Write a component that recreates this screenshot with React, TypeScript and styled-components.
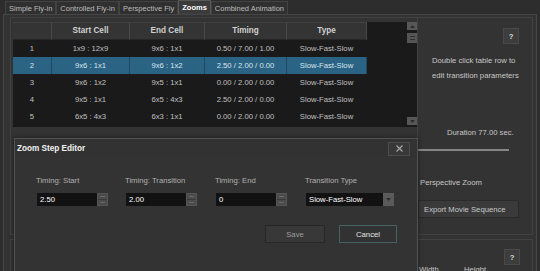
import React from "react";
import styled, { createGlobalStyle } from "styled-components";

const Global = createGlobalStyle`
  html, body { margin: 0; padding: 0; background: #2d2d2d; }
  body {
    font-family: "Liberation Sans", Arial, sans-serif;
    font-size: 7.7px;
    color: #c8c8c8;
  }
  * { box-sizing: border-box; }
`;

const Window = styled.div`
  position: relative;
  width: 540px;
  height: 271px;
  overflow: hidden;
  background: #2d2d2d;
  display: flex;
  flex-direction: column;
`;

const TabBar = styled.div`
  display: flex;
  align-items: flex-end;
  height: 22px;
  padding-left: 5px;
`;

const Tab = styled.div<{ $active?: boolean }>`
  height: ${(p) => (p.$active ? 14 : 13)}px;
  padding: 0 3px;
  border: 1px solid ${(p) => (p.$active ? "#585858" : "#424242")};
  border-bottom: none;
  background: ${(p) => (p.$active ? "#3b3b3b" : "#303030")};
  color: ${(p) => (p.$active ? "#ffffff" : "#bdbdbd")};
  font-weight: ${(p) => (p.$active ? 700 : 400)};
  font-size: 7.5px;
  display: flex;
  align-items: center;
  white-space: nowrap;
`;

const TabPanel = styled.div`
  flex: 1;
  margin: 0 3px;
  border: 1px solid #464646;
  background: #333333;
  padding: 2px 3px 0 6px;
  display: flex;
  flex-direction: column;
  gap: 4px;
`;

const TopRow = styled.div`
  display: flex;
  height: 218px;
`;

const BottomRow = styled.div`
  display: flex;
  flex: 1;
`;

const LeftGroup = styled.div`
  width: 407px;
  border: 1px solid #414141;
  border-right: none;
  padding: 4px 0 0 2px;
`;

const RightGroup = styled.div`
  flex: 1;
  border: 1px solid #414141;
  display: flex;
  flex-direction: column;
`;

const TableFrame = styled.div`
  display: flex;
  width: 404px;
  height: 105px;
  background: #1a1a1a;
`;

const Grid = styled.div`
  width: 393px;
  display: flex;
  flex-direction: column;
`;

const HeaderRow = styled.div`
  display: flex;
  height: 18px;
`;

const HeaderCell = styled.div<{ $w: number }>`
  width: ${(p) => p.$w}px;
  background: #343434;
  border-right: 1px solid #484848;
  border-bottom: 1px solid #262626;
  box-shadow: inset 0 1px 0 #404040;
  display: flex;
  align-items: center;
  justify-content: center;
  font-weight: 700;
  font-size: 8.2px;
  color: #d0d0d0;
`;

const Row = styled.div`
  display: flex;
  height: 17px;
`;

const Cell = styled.div<{ $w: number; $selected?: boolean }>`
  width: ${(p) => p.$w}px;
  background: ${(p) => (p.$selected ? "#2a6383" : "transparent")};
  border-right: 1px solid ${(p) => (p.$selected ? "#1e4a62" : "transparent")};
  color: ${(p) => (p.$selected ? "#d8e6ee" : "#c0c0c0")};
  display: flex;
  align-items: center;
  justify-content: center;
  white-space: nowrap;
`;

const ScrollBar = styled.div`
  width: 10px;
  margin-left: 1px;
  display: flex;
  flex-direction: column;
  padding-bottom: 2px;
`;

const ScrollBtn = styled.div`
  height: 8px;
  background: #575757;
  display: flex;
  align-items: center;
  justify-content: center;
`;

const ScrollThumb = styled.div`
  height: 10px;
  margin-top: 3px;
  background: #555555;
  display: flex;
  flex-direction: column;
  align-items: center;
  justify-content: center;
  gap: 2px;
`;

const GripLine = styled.div`
  width: 5px;
  height: 1px;
  background: #2f2f2f;
`;

const Spacer = styled.div`
  flex: 1;
`;

const HelpButton = styled.div<{ $mt: number; $mr: number }>`
  width: 16px;
  height: 16px;
  margin-top: ${(p) => p.$mt}px;
  margin-right: ${(p) => p.$mr}px;
  align-self: flex-end;
  background: #3d3d3d;
  border: 1px solid #4a4a4a;
  color: #dcdcdc;
  font-weight: 700;
  display: flex;
  align-items: center;
  justify-content: center;
`;

const Hint = styled.div`
  margin-top: 9px;
  padding-left: 14px;
  line-height: 15px;
  color: #c8c8c8;
`;

const Duration = styled.div`
  margin-top: 45px;
  padding-left: 29px;
  line-height: 10px;
  color: #c8c8c8;
`;

const ProgressLine = styled.div`
  margin-top: 11px;
  width: 91px;
  height: 2px;
  background: #858585;
`;

const CheckLabel = styled.div`
  margin-top: 27px;
  padding-left: 2px;
  line-height: 10px;
  color: #c8c8c8;
`;

const ExportButton = styled.div`
  margin-top: 12px;
  width: 101px;
  height: 18px;
  background: #3a3a3a;
  border: 1px solid #2a2a2a;
  padding-left: 5px;
  display: flex;
  align-items: center;
  color: #c8c8c8;
  white-space: nowrap;
`;

const LeftBottomGroup = styled.div`
  width: 407px;
  border: 1px solid #414141;
  border-right: none;
  border-bottom: none;
`;

const RightBottomGroup = styled.div`
  flex: 1;
  border: 1px solid #414141;
  border-bottom: none;
  display: flex;
  align-items: flex-start;
  padding: 0 12px 0 2px;
`;

const SizeLabel = styled.div<{ $w: number }>`
  width: ${(p) => p.$w}px;
  margin-top: 25px;
  line-height: 10px;
  color: #c8c8c8;
`;

const BottomHelp = styled.div`
  margin-left: auto;
  margin-top: 9px;
  width: 16px;
  height: 16px;
  background: #3d3d3d;
  border: 1px solid #4a4a4a;
  color: #dcdcdc;
  font-weight: 700;
  display: flex;
  align-items: center;
  justify-content: center;
`;

/* dialog overlay */
const Dialog = styled.div`
  position: absolute;
  left: 14px;
  top: 138px;
  width: 404px;
  height: 140px;
  background: #333333;
  border: 1px solid #525252;
  box-shadow: 0 0 4px rgba(0, 0, 0, 0.5);
  display: flex;
  flex-direction: column;
`;

const TitleBar = styled.div`
  height: 19px;
  display: flex;
  align-items: center;
  padding: 0 7px 0 2px;
  background: #323232;
  font-weight: 700;
  font-size: 8.2px;
  color: #f2f2f2;
`;

const CloseButton = styled.div`
  margin-left: auto;
  width: 22px;
  height: 14px;
  background: #383838;
  border: 1px solid #4c4c4c;
  display: flex;
  align-items: center;
  justify-content: center;
`;

const DialogBody = styled.div`
  padding: 18px 20px 0 21px;
  display: flex;
  flex-direction: column;
`;

const FieldRow = styled.div`
  display: flex;
`;

const Field = styled.div<{ $w?: number }>`
  width: ${(p) => (p.$w ? `${p.$w}px` : "auto")};
  display: flex;
  flex-direction: column;
`;

const FieldLabel = styled.div`
  line-height: 10px;
  color: #b0b0b0;
  white-space: nowrap;
`;

const InputRow = styled.div`
  margin-top: 7px;
  margin-left: 1px;
  display: flex;
  height: 13px;
`;

const Input = styled.div<{ $w: number }>`
  width: ${(p) => p.$w}px;
  background: #121212;
  color: #ffffff;
  padding-left: 3px;
  line-height: 13px;
  white-space: nowrap;
`;

const Spinner = styled.div`
  width: 11px;
  display: flex;
  flex-direction: column;
  background: #4b4b4b;
  border: 1px solid #555555;
`;

const SpinHalf = styled.div`
  flex: 1;
  display: flex;
  align-items: center;
  justify-content: center;
  & + & {
    border-top: 1px solid #3a3a3a;
  }
`;

const SpinMark = styled.div`
  width: 5px;
  height: 1px;
  background: #6a6a6a;
`;

const DropButton = styled.div`
  width: 11px;
  background: #5a5a5a;
  display: flex;
  align-items: center;
  justify-content: center;
`;

const ButtonRow = styled.div`
  margin-top: 19px;
  display: flex;
  justify-content: flex-end;
  gap: 14px;
`;

const DlgButton = styled.div<{ $w: number; $focused?: boolean }>`
  width: ${(p) => p.$w}px;
  height: 18px;
  background: ${(p) => (p.$focused ? "#323232" : "#383838")};
  border: 1px solid ${(p) => (p.$focused ? "#456262" : "#272727")};
  color: ${(p) => (p.$focused ? "#e6e6e6" : "#9c9c9c")};
  display: flex;
  align-items: center;
  justify-content: center;
`;

const COLS = [39, 78, 75, 82, 80];
const HEAD = ["", "Start Cell", "End Cell", "Timing", "Type"];
const ROWS = [
  ["1", "1x9 : 12x9", "9x6 : 1x1", "0.50 / 7.00 / 1.00", "Slow-Fast-Slow"],
  ["2", "9x6 : 1x1", "9x6 : 1x2", "2.50 / 2.00 / 0.00", "Slow-Fast-Slow"],
  ["3", "9x6 : 1x2", "9x5 : 1x1", "0.00 / 2.00 / 0.00", "Slow-Fast-Slow"],
  ["4", "9x5 : 1x1", "6x5 : 4x3", "2.50 / 2.00 / 0.00", "Slow-Fast-Slow"],
  ["5", "6x5 : 4x3", "6x3 : 1x1", "0.00 / 2.00 / 0.00", "Slow-Fast-Slow"],
];

const Tri = ({ up }: { up?: boolean }) => (
  <svg width="5" height="3" viewBox="0 0 5 3">
    <path d={up ? "M0 3 L2.5 0 L5 3 Z" : "M0 0 L2.5 3 L5 0 Z"} fill="#2c2c2c" />
  </svg>
);

const SpinBox = () => (
  <Spinner>
    <SpinHalf>
      <SpinMark />
    </SpinHalf>
    <SpinHalf>
      <SpinMark />
    </SpinHalf>
  </Spinner>
);

export default function App() {
  return (
    <>
      <Global />
      <Window>
        <TabBar>
          <Tab>Simple Fly-in</Tab>
          <Tab>Controlled Fly-in</Tab>
          <Tab>Perspective Fly</Tab>
          <Tab $active>Zooms</Tab>
          <Tab>Combined Animation</Tab>
        </TabBar>
        <TabPanel>
          <TopRow>
            <LeftGroup>
              <TableFrame>
                <Grid>
                  <HeaderRow>
                    {HEAD.map((h, i) => (
                      <HeaderCell key={i} $w={COLS[i]}>
                        {h}
                      </HeaderCell>
                    ))}
                  </HeaderRow>
                  {ROWS.map((r, ri) => (
                    <Row key={ri}>
                      {r.map((c, ci) => (
                        <Cell key={ci} $w={COLS[ci]} $selected={ri === 1}>
                          {c}
                        </Cell>
                      ))}
                    </Row>
                  ))}
                </Grid>
                <ScrollBar>
                  <ScrollBtn>
                    <Tri up />
                  </ScrollBtn>
                  <ScrollThumb>
                    <GripLine />
                    <GripLine />
                  </ScrollThumb>
                  <Spacer />
                  <ScrollBtn>
                    <Tri />
                  </ScrollBtn>
                </ScrollBar>
              </TableFrame>
            </LeftGroup>
            <RightGroup>
              <HelpButton $mt={10} $mr={13}>?</HelpButton>
              <Hint>
                Double click table row to
                <br />
                edit transition parameters
              </Hint>
              <Duration>Duration 77.00 sec.</Duration>
              <ProgressLine />
              <CheckLabel>Perspective Zoom</CheckLabel>
              <ExportButton>Export Movie Sequence</ExportButton>
            </RightGroup>
          </TopRow>
          <BottomRow>
            <LeftBottomGroup />
            <RightBottomGroup>
              <SizeLabel $w={45}>Width</SizeLabel>
              <SizeLabel $w={40}>Height</SizeLabel>
              <BottomHelp>?</BottomHelp>
            </RightBottomGroup>
          </BottomRow>
        </TabPanel>

        <Dialog>
          <TitleBar>
            Zoom Step Editor
            <CloseButton>
              <svg width="7" height="7" viewBox="0 0 7 7">
                <path d="M0.5 0.5 L6.5 6.5 M6.5 0.5 L0.5 6.5" stroke="#a8a8a8" strokeWidth="1.2" />
              </svg>
            </CloseButton>
          </TitleBar>
          <DialogBody>
            <FieldRow>
              <Field $w={89}>
                <FieldLabel>Timing: Start</FieldLabel>
                <InputRow>
                  <Input $w={60}>2.50</Input>
                  <SpinBox />
                </InputRow>
              </Field>
              <Field $w={90}>
                <FieldLabel>Timing: Transition</FieldLabel>
                <InputRow>
                  <Input $w={60}>2.00</Input>
                  <SpinBox />
                </InputRow>
              </Field>
              <Field $w={90}>
                <FieldLabel>Timing: End</FieldLabel>
                <InputRow>
                  <Input $w={60}>0</Input>
                  <SpinBox />
                </InputRow>
              </Field>
              <Field>
                <FieldLabel>Transition Type</FieldLabel>
                <InputRow>
                  <Input $w={77}>Slow-Fast-Slow</Input>
                  <DropButton>
                    <Tri />
                  </DropButton>
                </InputRow>
              </Field>
            </FieldRow>
            <ButtonRow>
              <DlgButton $w={60}>Save</DlgButton>
              <DlgButton $w={58} $focused>
                Cancel
              </DlgButton>
            </ButtonRow>
          </DialogBody>
        </Dialog>
      </Window>
    </>
  );
}
